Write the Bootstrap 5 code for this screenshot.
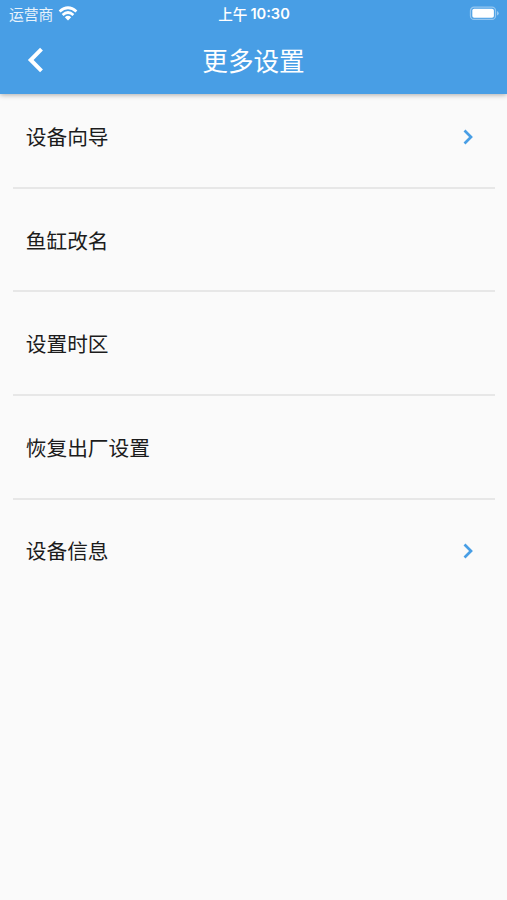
<!DOCTYPE html>
<html lang="zh-CN">
<head>
<meta charset="utf-8">
<meta name="viewport" content="width=device-width, initial-scale=1">
<title>更多设置</title>
<link href="https://cdn.jsdelivr.net/npm/bootstrap@5.3.0/dist/css/bootstrap.min.css" rel="stylesheet">
<style>
body { background: #fafafa; font-family: "Liberation Sans", "Noto Sans CJK SC", sans-serif; min-height: 100vh; }
.app-header { background: #489ee5; height: 94px; box-shadow: 0 1px 5px rgba(0,0,0,.32); }
.status-bar { height: 27px; padding: 0 8px 0 9px; font-size: 14.8px; line-height: 27px; }
.status-bar svg { margin-bottom: 2px; }
.carrier { gap: 5px; }
.carrier span { opacity: .88; padding-top: 2px; }
.clock { font-family: Inter, "Noto Sans CJK SC", sans-serif; font-size: 14.6px; font-weight: 600; gap: 3px; }
.clock-period { font-family: "Noto Sans CJK SC", sans-serif; font-weight: 500; line-height: 25px; }
.title-bar { height: 66px; padding: 0 24px; }
.title-bar h1 { font-size: 25.6px; line-height: 64px; padding-top: 4px; font-weight: 400; }
.side { width: 24px; }
.settings { padding: 0 12px 0 13px; }
.settings .list-group-item { height: 103.8px; padding: 0 19px 32.8px 12.8px; border-color: #e7e7e7; border-width: 0 0 2px; font-size: 20.7px; line-height: 32px; color: #1c1c1c; }
.settings .list-group-item:first-child { height: 94.5px; }
.settings .list-group-item:last-child { border-width: 0; padding-bottom: 35.8px; }
</style>
<script src="https://cdn.jsdelivr.net/npm/bootstrap@5.3.0/dist/js/bootstrap.bundle.min.js"></script>
</head>
<body>
<header class="app-header text-white">
  <div class="status-bar row g-0 align-items-center">
    <div class="col d-flex align-items-center carrier"><span>运营商</span>
      <svg width="20" height="15" viewBox="0 0 20 15" fill="none" stroke="#fff" stroke-width="2.7"><path d="M1.6 5.5Q10-2 18.4 5.5M4.6 8.9Q10 4.1 15.4 8.9"/><path d="M6.8 11.2Q10 8.5 13.2 11.2L10 14.4Z" fill="#fff" stroke="none"/></svg>
    </div>
    <div class="col-auto d-flex clock"><span class="clock-period">上午</span><span>10:30</span></div>
    <div class="col d-flex justify-content-end">
      <svg width="30" height="15" viewBox="0 0 30 15"><rect x="1.5" y="1.2" width="25" height="12.2" rx="3.5" fill="none" stroke="#fff" stroke-opacity=".42" stroke-width="1.3"/><rect x="3.3" y="2.8" width="21.6" height="9" rx="1.8" fill="#fff"/><path d="M28 5v4.6q1.7-.7 1.7-2.3T28 5z" fill="#fff" fill-opacity=".45"/></svg>
    </div>
  </div>
  <div class="title-bar d-flex align-items-center justify-content-between">
    <a href="#" class="side d-flex" aria-label="返回"><svg width="24" height="26" viewBox="0 0 24 26" fill="none" stroke="#fff" stroke-width="4"><path d="M17.5 2.2L6.7 13 17.5 23.8"/></svg></a>
    <h1 class="m-0">更多设置</h1>
    <span class="side"></span>
  </div>
</header>
<main class="settings">
  <ul class="list-group list-group-flush">
    <li class="list-group-item bg-transparent d-flex align-items-end justify-content-between"><span>设备向导</span>
      <svg class="mb-2" width="16" height="18" viewBox="0 0 16 18" fill="none" stroke="#489ee5" stroke-width="2.7"><path d="M4.5 2.5L11 9l-6.5 6.5"/></svg></li>
    <li class="list-group-item bg-transparent d-flex align-items-end"><span>鱼缸改名</span></li>
    <li class="list-group-item bg-transparent d-flex align-items-end"><span>设置时区</span></li>
    <li class="list-group-item bg-transparent d-flex align-items-end"><span>恢复出厂设置</span></li>
    <li class="list-group-item bg-transparent d-flex align-items-end justify-content-between"><span>设备信息</span>
      <svg class="mb-2" width="16" height="18" viewBox="0 0 16 18" fill="none" stroke="#489ee5" stroke-width="2.7"><path d="M4.5 2.5L11 9l-6.5 6.5"/></svg></li>
  </ul>
</main>
</body>
</html>
